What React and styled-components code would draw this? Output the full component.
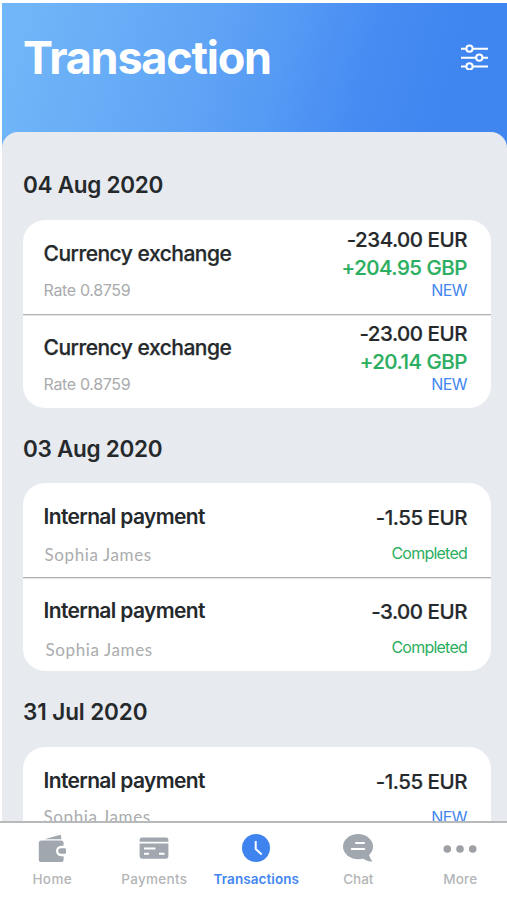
import React from 'react';
import styled, { createGlobalStyle } from 'styled-components';

const GlobalStyle = createGlobalStyle`
  *, *::before, *::after { box-sizing: border-box; }
  html, body { margin: 0; padding: 0; background: #fff; }
  body { font-family: Inter, 'Liberation Sans', sans-serif; color: #25292c; overflow: hidden; }
  h1, h2, p { margin: 0; }
`;

const Screen = styled.div`
  display: flex;
  flex-direction: column;
  width: 507px;
  height: 900px;
  overflow: hidden;
  background: #fff;
`;

const Body = styled.div`
  flex: 1;
  min-height: 0;
  display: flex;
  flex-direction: column;
  margin: 3px 0 0 2px;
  background: linear-gradient(105deg, #71b6f8 4%, #60a5f5 38%, #559af4 54%, #478cf2 70%, #4086f1 86%);
  background-size: 100% 145px;
  background-repeat: no-repeat;
  overflow: hidden;
`;

const Header = styled.header`
  flex: none;
  display: flex;
  justify-content: space-between;
  height: 129px;
  padding: 27px 18px 0 21px;
`;

const Title = styled.h1`
  font-size: 45px;
  font-weight: 700;
  line-height: 56px;
  letter-spacing: -1.24px;
  color: #fff;
`;

const FilterButton = styled.button`
  width: 30px;
  height: 26px;
  margin-top: 14px;
  padding: 0;
  border: 0;
  background: none;
  svg { display: block; }
`;

const Panel = styled.main`
  flex: 1;
  min-height: 0;
  padding: 39px 16px 0 21px;
  border-radius: 16px 16px 0 0;
  background: #e7eaef;
  overflow: hidden;
`;

const Day = styled.section`
  & + & { padding-top: 27px; }
`;

const DayTitle = styled.h2`
  margin-bottom: ${(p) => p.$gap}px;
  font-size: 22.5px;
  font-weight: 600;
  line-height: 28px;
  letter-spacing: ${(p) => p.$tracking}px;
`;

const Card = styled.div`
  height: 188px;
  border-radius: 22px;
  background: #fff;
  overflow: hidden;
`;

const Row = styled.div`
  display: flex;
  justify-content: space-between;
  height: 94px;
  padding: 0 24px 0 20.5px;
  & + & { box-shadow: inset 0 1px #b0b3b4, inset 0 2px #e4e5e5; }
`;

const Details = styled.div`
  padding-top: 20px;
`;

const Name = styled.p`
  font-size: 21px;
  font-weight: ${(p) => (p.$payment ? 600 : 500)};
  line-height: 28px;
  letter-spacing: ${(p) => (p.$payment ? -0.64 : -0.5)}px;
  -webkit-text-stroke: ${(p) => (p.$payment ? 0 : 0.25)}px currentColor;
`;

const Rate = styled.p`
  margin-top: 10px;
  font-size: 16px;
  line-height: 24px;
  letter-spacing: -0.33px;
  color: #a9abad;
`;

const Person = styled.p`
  margin-top: ${(p) => p.$gap}px;
  padding-left: ${(p) => p.$indent}px;
  font-family: Lato, 'Open Sans', sans-serif;
  font-size: 17px;
  line-height: 24px;
  letter-spacing: 0.62px;
  color: #aaacae;
`;

const Amounts = styled.div`
  display: flex;
  flex-direction: column;
  align-items: flex-end;
  padding-top: ${(p) => (p.$single ? 21 : 6)}px;
`;

const Amount = styled.p`
  font-size: 20.5px;
  font-weight: 500;
  line-height: 28px;
  letter-spacing: -0.48px;
  -webkit-text-stroke: 0.2px currentColor;
  color: ${(p) => (p.$incoming ? '#2bae60' : '#25292c')};
`;

const Status = styled.p`
  margin-top: ${(p) => (p.$single ? 12 : -1)}px;
  font-size: 16px;
  line-height: 18px;
  letter-spacing: ${(p) => (p.$done ? -0.77 : -0.55)}px;
  color: ${(p) => (p.$done ? '#2bae60' : '#4386f0')};
`;

const TabBar = styled.nav`
  flex: none;
  display: grid;
  grid-template-columns: repeat(5, 102px);
  height: 79px;
  padding-left: 1.3px;
  border-top: 2px solid #b7b9bb;
  background: #fff;
`;

const Tab = styled.button`
  display: flex;
  flex-direction: column;
  align-items: center;
  padding: 10px 0 0;
  border: 0;
  background: none;
  font: ${(p) => (p.$active ? 600 : 500)} 13.5px/18px Inter, sans-serif;
  letter-spacing: ${(p) => p.$tracking}px;
  color: ${(p) => (p.$active ? '#4286f1' : '#b3b5b7')};
  white-space: nowrap;
  svg { display: block; margin-bottom: 7px; color: ${(p) => (p.$active ? '#3f83ef' : '#a0a7af')}; }
`;

const FilterIcon = () => (
  <svg width="30" height="26" viewBox="0 0 30 26" fill="none" stroke="#fff" strokeWidth="2">
    <path d="M2 4.7h5.3M13.7 4.7h15.3M2 13.7h15.2M23.4 13.7h5.6M2 22.4h5.3M13.7 22.4h15.3" />
    <circle cx="10.5" cy="4.7" r="3.1" />
    <circle cx="20.3" cy="13.7" r="3.1" />
    <circle cx="10.5" cy="22.4" r="3.1" />
  </svg>
);

const WalletIcon = () => (
  <svg width="30" height="30" viewBox="0 0 30 30">
    <path fill="currentColor" d="M7.5 6.3 22.5 1.9q1.3-.2 1.5 1l.4 3.400z" />
    <rect x="1.8" y="7.5" width="24.8" height="21.5" rx="2.6" fill="currentColor" />
    <path fill="#fff" d="M24.2 12.8H30v10.400h-5.800a5.200 5.200 0 0 1 0-10.400z" />
    <path fill="currentColor" d="M24 15.2h3.800q1.200 0 1.200 1.200v3.200q0 1.200-1.200 1.200H24a2.800 2.800 0 0 1 0-5.600z" />
  </svg>
);

const CardIcon = () => (
  <svg width="30" height="30" viewBox="0 0 30 30">
    <path fill="currentColor" d="M3 4.400h24a2.400 2.400 0 0 1 2.400 2.400v2H.6v-2A2.400 2.400 0 0 1 3 4.400zM.6 10.500h28.800v12.800a2.400 2.400 0 0 1-2.400 2.400H3a2.400 2.400 0 0 1-2.400-2.400z" />
    <path stroke="#fff" strokeWidth="2" d="M5 15.500h11.500M5 20.800h5M20 20.800h5.500" />
  </svg>
);

const ClockIcon = () => (
  <svg width="30" height="30" viewBox="0 0 30 30">
    <circle cx="15" cy="15" r="14" fill="currentColor" />
    <path d="M14.7 8v8l6 5.500" fill="none" stroke="#fff" strokeWidth="2" />
  </svg>
);

const ChatIcon = () => (
  <svg width="32" height="30" viewBox="0 0 32 30">
    <ellipse cx="16" cy="13.6" rx="15" ry="12.6" fill="currentColor" />
    <path fill="currentColor" d="M26.900 21.500q1 4 3.500 7.300-5.800-.5-10-3.200z" />
    <path stroke="#fff" strokeWidth="1.9" strokeLinecap="round" d="M13.900 10h8.200M9.700 16h12.600" />
  </svg>
);

const MoreIcon = () => (
  <svg width="34" height="30" viewBox="0 0 34 30" fill="#9da0a4">
    <circle cx="4.3" cy="16" r="3.8" />
    <circle cx="17" cy="16" r="3.8" />
    <circle cx="29.7" cy="16" r="3.8" />
  </svg>
);

const days = [
  {
    date: '04 Aug 2020',
    tracking: -0.28,
    gap: 21,
    rows: [
      { name: 'Currency exchange', rate: 'Rate 0.8759', amount: '-234.00 EUR', received: '+204.95 GBP', status: 'NEW' },
      { name: 'Currency exchange', rate: 'Rate 0.8759', amount: '-23.00 EUR', received: '+20.14 GBP', status: 'NEW' },
    ],
  },
  {
    date: '03 Aug 2020',
    tracking: -0.28,
    gap: 20,
    rows: [
      { name: 'Internal payment', person: 'Sophia James', indent: 1, gap: 12, amount: '-1.55 EUR', status: 'Completed' },
      { name: 'Internal payment', person: 'Sophia James', indent: 2, gap: 13, amount: '-3.00 EUR', status: 'Completed' },
    ],
  },
  {
    date: '31 Jul 2020',
    tracking: -0.1,
    gap: 21,
    rows: [{ name: 'Internal payment', person: 'Sophia James', indent: 0, gap: 10, amount: '-1.55 EUR', status: 'NEW' }],
  },
];

const tabs = [
  { label: 'Home', icon: WalletIcon, tracking: 0.4 },
  { label: 'Payments', icon: CardIcon, tracking: 0.3 },
  { label: 'Transactions', icon: ClockIcon, tracking: 0.07, active: true },
  { label: 'Chat', icon: ChatIcon, tracking: 0 },
  { label: 'More', icon: MoreIcon, tracking: 0.2 },
];

function Transaction({ item }) {
  const single = !item.received;
  return (
    <Row>
      <Details>
        <Name $payment={single}>{item.name}</Name>
        {item.rate ? <Rate>{item.rate}</Rate> : <Person $indent={item.indent} $gap={item.gap}>{item.person}</Person>}
      </Details>
      <Amounts $single={single}>
        <Amount>{item.amount}</Amount>
        {item.received && <Amount $incoming>{item.received}</Amount>}
        <Status $single={single} $done={item.status === 'Completed'}>{item.status}</Status>
      </Amounts>
    </Row>
  );
}

export default function App() {
  return (
    <Screen>
      <GlobalStyle />
      <Body>
        <Header>
          <Title>Transaction</Title>
          <FilterButton aria-label="Filter"><FilterIcon /></FilterButton>
        </Header>
        <Panel>
          {days.map((day) => (
            <Day key={day.date}>
              <DayTitle $tracking={day.tracking} $gap={day.gap}>{day.date}</DayTitle>
              <Card>
                {day.rows.map((item, i) => <Transaction key={i} item={item} />)}
              </Card>
            </Day>
          ))}
        </Panel>
      </Body>
      <TabBar>
        {tabs.map(({ label, icon: Icon, tracking, active }) => (
          <Tab key={label} $active={active} $tracking={tracking}>
            <Icon />
            {label}
          </Tab>
        ))}
      </TabBar>
    </Screen>
  );
}
